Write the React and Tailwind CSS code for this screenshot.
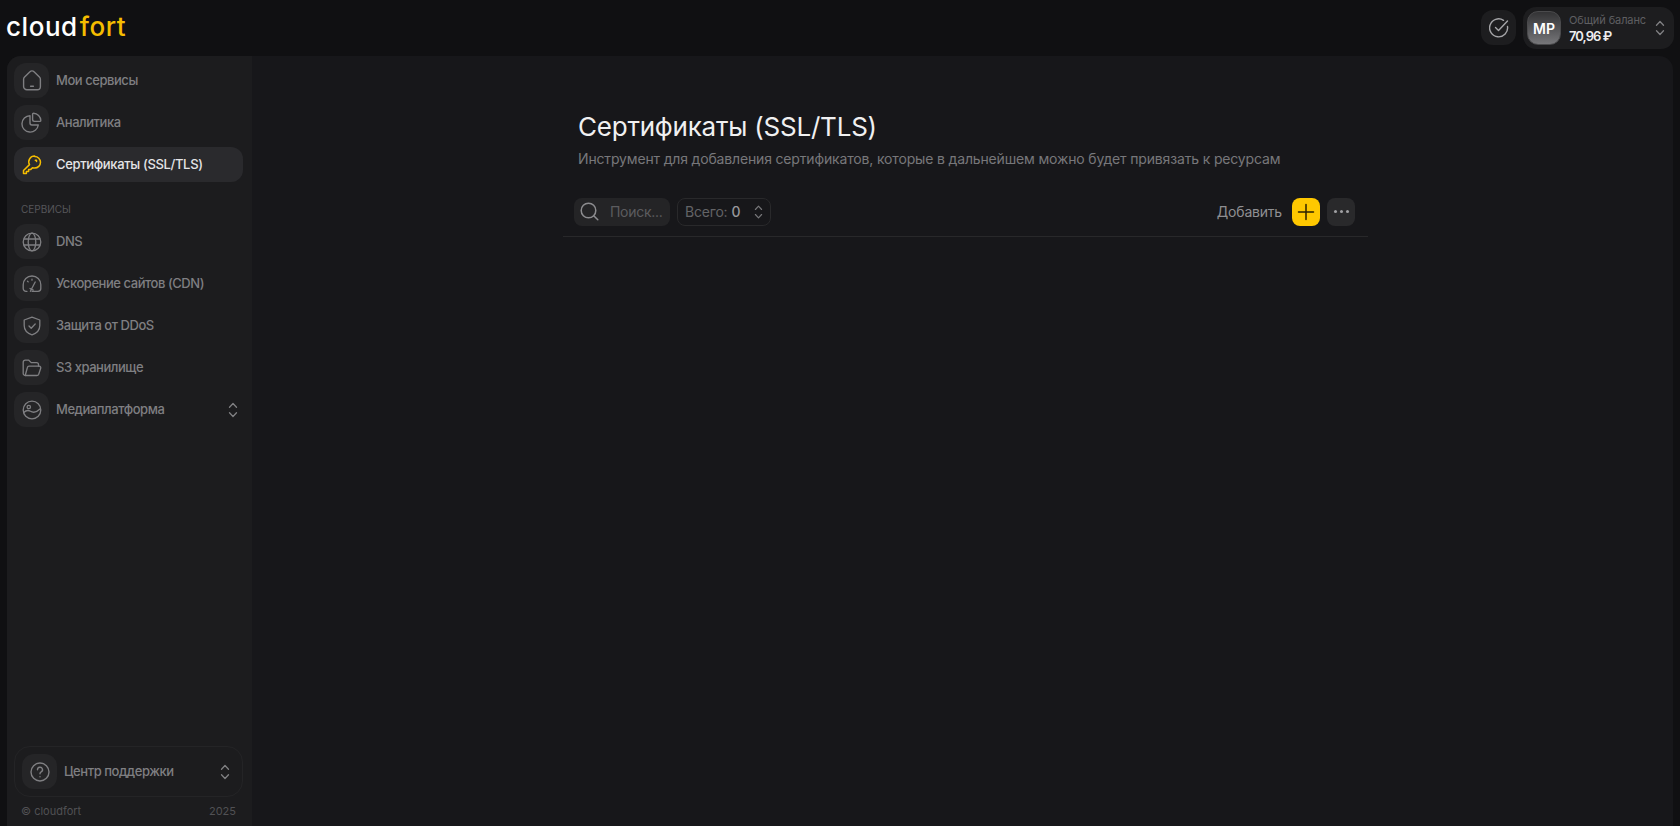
import React from 'react';

const font = { fontFamily: 'Inter, "Noto Sans", sans-serif' };

const Updown = ({ className, w = 12, h = 18 }) => (
  <svg className={className} width={w} height={h} viewBox="0 0 12 18" fill="none" stroke="currentColor" strokeWidth="1.3" strokeLinecap="round" strokeLinejoin="round">
    <path d="M2.500 6.200 6 2.500l3.500 3.700" />
    <path d="M2.500 11.800 6 15.500l3.500-3.700" />
  </svg>
);

const HomeIcon = () => (
  <svg width="20" height="21" viewBox="0 0 20 21" fill="none" stroke="currentColor" strokeWidth="1.4" strokeLinecap="round" strokeLinejoin="round">
    <path d="M2.600 6.900 7.700 2a3.300 3.300 0 0 1 4.600 0l5.100 4.900a3.300 3.300 0 0 1 1 2.400v7.200a3.300 3.300 0 0 1-3.300 3.300H4.900a3.300 3.300 0 0 1-3.300-3.300V9.300a3.300 3.300 0 0 1 1-2.400Z" />
    <path d="M8.600 16.300h2.800" />
  </svg>
);
const PieIcon = () => (
  <svg width="21" height="21" viewBox="0 0 21 21" fill="none" stroke="currentColor" strokeWidth="1.4" strokeLinecap="round" strokeLinejoin="round">
    <path d="M9 3.700a8.200 8.200 0 1 0 8.300 9.300H11a2 2 0 0 1-2-2V3.700Z" />
    <path d="M12.500 1.200a7.500 7.500 0 0 1 7.300 7.300.9.900 0 0 1-.9.900h-5.500a1.800 1.800 0 0 1-1.800-1.800V2.100a.9.900 0 0 1 .9-.9Z" />
  </svg>
);
const KeyIcon = () => (
  <svg width="20" height="20" viewBox="0 0 20 20" fill="none" stroke="#f5bd00" strokeWidth="1.5" strokeLinecap="round" strokeLinejoin="round">
    <path d="M12.700 1.500a5.800 5.800 0 0 1 0 11.600c-.8 0-1.500-.15-2.200-.4L8.800 14.400H6.600v2.200H4.400v1.900H1.500v-3l6-5.900a5.800 5.800 0 0 1 5.200-8.600Z" />
    <path d="M13.300 5.300h1.200v1.200" />
  </svg>
);
const GlobeIcon = () => (
  <svg width="20" height="20" viewBox="0 0 20 20" fill="none" stroke="currentColor" strokeWidth="1.3">
    <circle cx="10" cy="10" r="8.800" />
    <ellipse cx="10" cy="10" rx="3.800" ry="8.800" />
    <path d="M1.800 7h16.400M1.800 13h16.400" />
  </svg>
);
const GaugeIcon = () => (
  <svg width="20" height="20" viewBox="0 0 20 20" fill="none" stroke="currentColor" strokeWidth="1.3" strokeLinecap="round" strokeLinejoin="round">
    <path d="M5 17.300H4a2.800 2.800 0 0 1-2.800-2.800v-3.700a8.800 8.800 0 0 1 17.600 0v3.700a2.800 2.800 0 0 1-2.800 2.800h-6" />
    <path d="M8.400 17.300 13.200 8M8 14.500l3.200 1.600" />
    <path d="M5.500 7.200l.7.700M10 5.200v1" />
  </svg>
);
const ShieldIcon = () => (
  <svg width="18" height="20" viewBox="0 0 18 20" fill="none" stroke="currentColor" strokeWidth="1.3" strokeLinecap="round" strokeLinejoin="round">
    <path d="M9 1.200 16.800 4v5.500c0 4.500-3.200 7.800-7.800 9.300-4.600-1.500-7.800-4.800-7.800-9.300V4L9 1.200Z" />
    <path d="m6 10 2.200 2.200L12.200 8" />
  </svg>
);
const FolderIcon = () => (
  <svg width="20" height="18" viewBox="0 0 20 18" fill="none" stroke="currentColor" strokeWidth="1.3" strokeLinecap="round" strokeLinejoin="round">
    <path d="M3.200 16.500A2 2 0 0 1 1.200 14.500V3.200a2 2 0 0 1 2-2h3.600l2.400 2.400h5.300a2 2 0 0 1 2 2v1.600" />
    <path d="M3.200 16.500 5.400 8.500a1.700 1.700 0 0 1 1.600-1.300h10.300a1.500 1.500 0 0 1 1.400 2l-2 6a2 2 0 0 1-1.900 1.300H3.200Z" />
  </svg>
);
const MediaIcon = () => (
  <svg width="20" height="20" viewBox="0 0 20 20" fill="none" stroke="currentColor" strokeWidth="1.3" strokeLinecap="round" strokeLinejoin="round">
    <circle cx="10" cy="10" r="8.800" />
    <circle cx="6.800" cy="7" r="1.700" />
    <path d="M1.800 12.500c2.500-2.500 4.500-2.500 6.700-1.200 2.700 1.600 5.500 1.600 9.500-2.300" />
  </svg>
);
const HelpIcon = () => (
  <svg width="20" height="20" viewBox="0 0 20 20" fill="none" stroke="currentColor" strokeWidth="1.4" strokeLinecap="round" strokeLinejoin="round">
    <circle cx="10" cy="10" r="9" />
    <path d="M7.500 7.700a2.500 2.500 0 1 1 3.700 2.200c-.8.450-1.200 1-1.200 1.800" />
    <path d="M10 14.600v.1" />
  </svg>
);
const CheckCircleIcon = () => (
  <svg width="20" height="20" viewBox="0 0 20 20" fill="none" stroke="currentColor" strokeWidth="1.4" strokeLinecap="round" strokeLinejoin="round">
    <path d="M18.500 8.500A9 9 0 1 1 14.500 2.300" />
    <path d="m6.500 9.500 3 3 9-9.500" />
  </svg>
);
const SearchIcon = () => (
  <svg width="19" height="19" viewBox="0 0 19 19" fill="none" stroke="currentColor" strokeWidth="1.5" strokeLinecap="round">
    <circle cx="8.500" cy="8.500" r="7.300" />
    <path d="m14 14 3.800 3.800" />
  </svg>
);

const NavItem = ({ icon, label, active, chevron }) => (
  <div className={`flex items-center h-[35px] rounded-[12px] w-full ${active ? 'bg-[#2a2a2d] text-[#e4e4e6]' : 'text-[#7f7f82]'}`}>
    <div className={`flex items-center justify-center w-[35px] h-[35px] rounded-[12px] shrink-0 ${active ? '' : 'bg-[#252527]'}`}>
      {icon}
    </div>
    <span className={`ml-[7px] text-[13px] font-medium leading-none whitespace-nowrap ${active ? 'tracking-[-0.34px]' : 'tracking-[-0.45px]'}`}>{label}</span>
    {chevron && <Updown className="ml-auto mr-[4px] text-[#808083]" />}
  </div>
);

export default function App() {
  return (
    <div className="flex flex-col h-[826px] overflow-hidden bg-[#101012]" style={font}>
      <header className="flex items-start justify-between h-[56px] shrink-0 pl-[6px] pr-[6px]">
        <div className="flex mt-[10px] text-[26px] font-medium leading-[34px] tracking-[0.55px]">
          <span className="text-white mr-[2px]">cloud</span>
          <span className="text-[#f5bd00]">fort</span>
        </div>
        <div className="flex items-start gap-[7px] mt-[7px]">
          <div className="flex items-center justify-center w-[35px] h-[35px] mt-[3px] rounded-[12px] bg-[#1d1d1f] text-[#a5a5a8]">
            <CheckCircleIcon />
          </div>
          <div className="flex items-center w-[151px] h-[42px] rounded-[13px] bg-[#1d1d1f] pl-[4px]">
            <div className="flex items-center justify-center w-[34px] h-[34px] rounded-[11px] border border-[#4a4a4c] bg-gradient-to-b from-[#333335] to-[#77777a] text-white text-[14px] font-semibold">
              MP
            </div>
            <div className="ml-[8px] flex flex-col gap-[2px]">
              <span className="text-[11px] leading-[14px] text-[#5f5f62] whitespace-nowrap tracking-[-0.1px]">Общий баланс</span>
              <span className="text-[13px] leading-[15px] font-semibold text-[#eeeeef] whitespace-nowrap tracking-[-0.95px]">70,96 ₽</span>
            </div>
            <Updown className="ml-auto mr-[8px] text-[#808083]" />
          </div>
        </div>
      </header>

      <div className="flex flex-1 mx-[7px] rounded-t-[14px] overflow-hidden bg-[#17171a] min-h-0">
        <aside className="flex flex-col w-[245px] shrink-0 bg-[#1c1c1e] pl-[7px] pr-[9px] pt-[7px]">
          <div className="flex flex-col gap-[7px]">
            <NavItem icon={<HomeIcon />} label="Мои сервисы" />
            <NavItem icon={<PieIcon />} label="Аналитика" />
            <NavItem icon={<KeyIcon />} label="Сертификаты (SSL/TLS)" active />
          </div>
          <div className="mt-[20px] mb-[8px] pl-[7px] text-[10px] leading-[14px] text-[#56565a]">СЕРВИСЫ</div>
          <div className="flex flex-col gap-[7px]">
            <NavItem icon={<GlobeIcon />} label="DNS" />
            <NavItem icon={<GaugeIcon />} label="Ускорение сайтов (CDN)" />
            <NavItem icon={<ShieldIcon />} label="Защита от DDoS" />
            <NavItem icon={<FolderIcon />} label="S3 хранилище" />
            <NavItem icon={<MediaIcon />} label="Медиаплатформа" chevron />
          </div>
          <div className="mt-auto">
            <div className="flex items-center h-[51px] rounded-[16px] border border-[#242426] pl-[7px] text-[#7f7f82]">
              <NavItem icon={<HelpIcon />} label="Центр поддержки" chevron />
              <span className="w-[7px] shrink-0" />
            </div>
            <div className="flex justify-between h-[29px] items-center px-[7px] text-[11px] text-[#515154]">
              <span>© cloudfort</span>
              <span>2025</span>
            </div>
          </div>
        </aside>

        <main className="flex-1 min-w-0 pl-[311px]">
          <div className="w-[805px] pt-[55px]">
            <div className="pl-[15px]">
              <h1 className="text-[26px] leading-[32px] font-normal text-[#f0f0f1] whitespace-nowrap tracking-[-0.22px]">Сертификаты (SSL/TLS)</h1>
              <p className="mt-[6px] text-[14px] leading-[20px] text-[#77777a] whitespace-nowrap tracking-[-0.16px]">
                Инструмент для добавления сертификатов, которые в дальнейшем можно будет привязать к ресурсам
              </p>
            </div>
            <div className="flex items-center h-[29px] mt-[28px] pl-[11px] pr-[13px]">
              <div className="flex items-center w-[96px] h-[28px] rounded-[8px] bg-[#242426] pl-[6px] text-[#8c8c8f]">
                <SearchIcon />
                <span className="ml-[11px] text-[14px] text-[#5c5c5f] tracking-[-0.3px]">Поиск...</span>
              </div>
              <div className="flex items-center w-[94px] h-[28px] ml-[7px] rounded-[8px] border border-[#29292b] pl-[7px] text-[14px]">
                <span className="text-[#636366] tracking-[-0.2px]">Всего:</span>
                <span className="ml-[4px] text-[#98989b] font-medium">0</span>
                <Updown className="ml-auto mr-[6px] text-[#77777a]" w={11} h={16} />
              </div>
              <span className="ml-auto text-[14px] text-[#8f8f92] tracking-[-0.2px]">Добавить</span>
              <button className="flex items-center justify-center w-[28px] h-[28px] ml-[10px] rounded-[8px] bg-[#ffc800] text-[#2b2100]">
                <svg width="18" height="18" viewBox="0 0 18 18" fill="none" stroke="currentColor" strokeWidth="1.5" strokeLinecap="round">
                  <path d="M9 1.500v15M1.500 9h15" />
                </svg>
              </button>
              <button className="flex items-center justify-center gap-[3px] w-[28px] h-[28px] ml-[7px] rounded-[8px] bg-[#29292b]">
                <span className="w-[3px] h-[3px] rounded-full bg-[#a0a0a3]" />
                <span className="w-[3px] h-[3px] rounded-full bg-[#a0a0a3]" />
                <span className="w-[3px] h-[3px] rounded-full bg-[#a0a0a3]" />
              </button>
            </div>
            <div className="h-px mt-[10px] bg-[#28282a]" />
          </div>
        </main>
      </div>
    </div>
  );
}
